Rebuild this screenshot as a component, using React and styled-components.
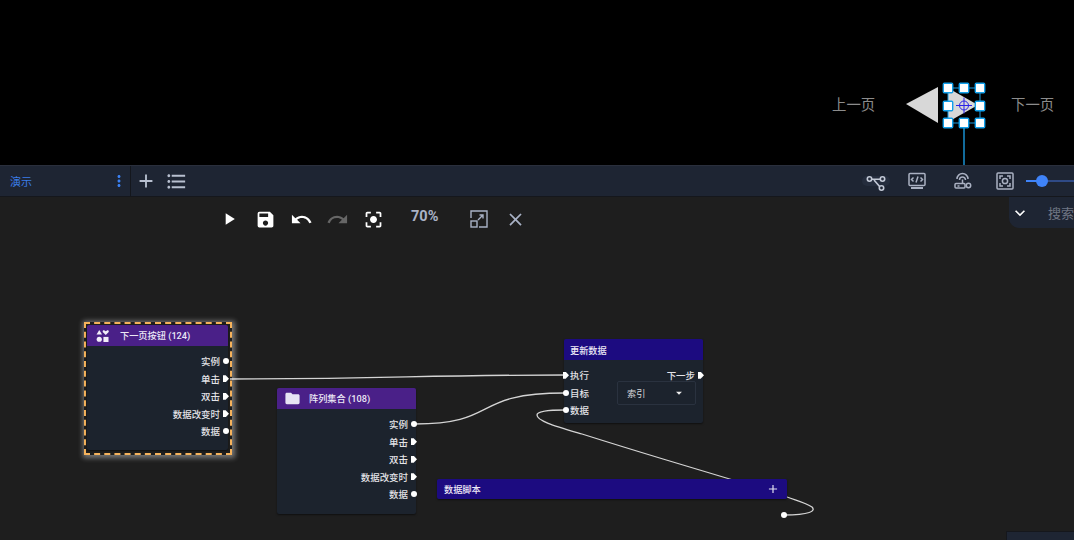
import styled, { createGlobalStyle } from "styled-components";
import {
  MdPlayArrow,
  MdSave,
  MdUndo,
  MdRedo,
  MdCenterFocusStrong,
  MdClose,
  MdAdd,
  MdFormatListBulleted,
  MdMoreVert,
  MdKeyboardArrowDown,
  MdFolder,
  MdArrowDropDown,
} from "react-icons/md";

const FONT = `Roboto, "Noto Sans CJK SC", sans-serif`;

const HANDLES = [
  [948, 88],
  [964, 88],
  [980, 88],
  [948, 106],
  [980, 106],
  [948, 123],
  [964, 123],
  [980, 123],
];

const GlobalStyle = createGlobalStyle`
  html, body {
    margin: 0;
    padding: 0;
    background: #000;
  }
  #root {
    width: 1074px;
    height: 540px;
    overflow: hidden;
  }
`;

const App = () => {
  return (
    <Page>
      <GlobalStyle />
      <Stage>
        <StageLabel $x={832}>上一页</StageLabel>
        <StageDrawing viewBox="0 0 1074 165">
          <polygon points="906,104 938,87 938,123" fill="#d8d8d8" />
          <polygon points="948,88 948,122 978,105" fill="#d8d8d8" />
          <rect x="948" y="88" width="32" height="35" fill="none" stroke="#1b9ade" />
          <line x1="964" y1="128" x2="964" y2="165" stroke="#1b9ade" strokeWidth="1.4" />
          {HANDLES.map(([x, y]) => (
            <rect key={x + "-" + y} x={x - 4.7} y={y - 4.7} width="9.4" height="9.4" rx="1" fill="#fff" stroke="#12a0ea" strokeWidth="1.4" />
          ))}
          <circle cx="964" cy="105.5" r="4.5" fill="none" stroke="#2a22e8" />
          <path d="M956 105.5h16M964 97.5v16" stroke="#2a22e8" />
        </StageDrawing>
        <StageLabel $x={1011}>下一页</StageLabel>
      </Stage>

      <Toolbar>
        <TabCell>
          <TabName>演示</TabName>
          <MdMoreVert size={18} color="#3b82f6" />
        </TabCell>
        <ToolIcons>
          <MdAdd size={22} color="#b8c0d0" />
          <MdFormatListBulleted size={23} color="#b8c0d0" />
        </ToolIcons>
        <RightTools>
          <HintPill>
            <svg width="20" height="18" viewBox="0 0 20 18" fill="none" stroke="#c3c9d6" strokeWidth="1.6">
              <circle cx="3.5" cy="5" r="2.2" />
              <circle cx="16.5" cy="5" r="2.2" />
              <circle cx="15.5" cy="14" r="2.2" />
              <path d="M5.7 5.3 L14.3 5.3 M8 6 L13.6 12.6" />
            </svg>
          </HintPill>
          <ToolGlyph $gap={18} width="18" height="18" viewBox="0 0 18 18">
            <rect x="1" y="1.5" width="16" height="12" rx="1" />
            <path d="M5.5 5.5 L3.5 7.5 L5.5 9.5 M12.5 5.5 L14.5 7.5 L12.5 9.5 M10 4.5 L8 10.5" />
            <path d="M3 16h12" strokeWidth="2" />
          </ToolGlyph>
          <ToolGlyph $gap={27} width="20" height="18" viewBox="0 0 20 18">
            <path d="M4 7 A5.5 5.5 0 0 1 15 7 M6.5 8 A3 3 0 0 1 12.5 8" />
            <path d="M9.5 7.5v4" />
            <rect x="2" y="11.5" width="10" height="4.5" rx="1" />
            <circle cx="15.5" cy="13.5" r="2.2" />
            <path d="M4.5 14h2" />
          </ToolGlyph>
          <ToolGlyph $gap={23} width="18" height="18" viewBox="0 0 18 18">
            <rect x="1" y="1" width="16" height="16" rx="1" />
            <path d="M4 7V4h3M11 4h3v3M14 11v3h-3M7 14H4v-3" />
            <circle cx="9" cy="9" r="2.6" />
          </ToolGlyph>
          <Slider>
            <SliderThumb />
          </Slider>
        </RightTools>
      </Toolbar>

      <Canvas>
        <Wires viewBox="0 0 1074 343">
          <g fill="none" stroke="#d4d4d4" strokeWidth="1.3" transform="translate(0,-197)">
            <path d="M230 379 C 390 379, 420 375, 565 375" />
            <path d="M415 424 C 500 424, 470 393, 565 393" />
            <path d="M784 515 C 810 515, 816 511, 812 507 C 806 503, 798 501, 787 497 L 733 480 L 663 459 C 620 446, 582 434, 582 434 C 555 426, 537 421, 537 415 C 537 411, 548 410, 565 410" />
          </g>
          <circle cx="784" cy="318" r="3" fill="#fff" />
        </Wires>

        <FloatBar>
          <BarIcon $color="#fff"><MdPlayArrow size={20} /></BarIcon>
          <BarIcon $color="#fff"><MdSave size={21} /></BarIcon>
          <BarIcon $color="#fff"><MdUndo size={23} /></BarIcon>
          <BarIcon $color="#666"><MdRedo size={23} /></BarIcon>
          <BarIcon $color="#fff"><MdCenterFocusStrong size={21} /></BarIcon>
          <Zoom>70%</Zoom>
          <BarIcon $color="#a9b2c6">
            <svg width="18" height="18" viewBox="0 0 18 18" fill="none" stroke="currentColor" strokeWidth="1.4">
              <path d="M1 8V1h16v16H9" />
              <rect x="1" y="11" width="6" height="6" />
              <path d="M8 10 L13 5 M9.5 5H13V8.5" />
            </svg>
          </BarIcon>
          <BarIcon $color="#a9b2c6"><MdClose size={21} /></BarIcon>
        </FloatBar>

        <SearchTab>
          <MdKeyboardArrowDown size={20} color="#fff" />
          <SearchText>搜索</SearchText>
        </SearchTab>

        <Selected $x={84} $y={125} />

        <Node $x={87} $y={128} $w={141} $h={125}>
          <NodeHeader $kind="object" $pad={9}>
            <svg width="13" height="12" viewBox="0 0 13 13" fill="#f1edf8">
              <polygon points="3,0 6,5 0,5" />
              <path d="M10 5.5 L7 2.5 C6 1 7.5 -.2 9 .7 L10 1.4 L11 .7 C12.5 -.2 14 1 13 2.5 Z" />
              <circle cx="3" cy="10" r="2.8" />
              <rect x="7.5" y="7.5" width="5.5" height="5.5" />
            </svg>
            <HeaderTitle $gap={11}>下一页按钮 (124)</HeaderTitle>
          </NodeHeader>
          <NodeBody>
            <OutRow label="实例" />
            <OutRow label="单击" arrow />
            <OutRow label="双击" arrow />
            <OutRow label="数据改变时" arrow />
            <OutRow label="数据" />
          </NodeBody>
        </Node>

        <Node $x={277} $y={191} $w={139} $h={126}>
          <NodeHeader $kind="object">
            <MdFolder size={17} color="#e6e4f4" />
            <HeaderTitle $gap={8}>阵列集合 (108)</HeaderTitle>
          </NodeHeader>
          <NodeBody>
            <OutRow label="实例" />
            <OutRow label="单击" arrow />
            <OutRow label="双击" arrow />
            <OutRow label="数据改变时" arrow />
            <OutRow label="数据" />
          </NodeBody>
        </Node>

        <Node $x={564} $y={142} $w={139} $h={84}>
          <NodeHeader $kind="action" $pad={6}>
            <HeaderTitle>更新数据</HeaderTitle>
          </NodeHeader>
          <NodeBody>
            <MixedRow>
              <InPort><Arrow /></InPort>
              <RowLabel>执行</RowLabel>
              <RowRight>
                <RowLabel>下一步</RowLabel>
                <OutPort><Arrow /></OutPort>
              </RowRight>
            </MixedRow>
            <MixedRow>
              <InPort><Dot /></InPort>
              <RowLabel>目标</RowLabel>
              <RowRight>
                <SelectBox>
                  <span>索引</span>
                  <MdArrowDropDown size={14} color="#eee" />
                </SelectBox>
              </RowRight>
            </MixedRow>
            <MixedRow>
              <InPort><Dot /></InPort>
              <RowLabel>数据</RowLabel>
            </MixedRow>
          </NodeBody>
        </Node>

        <Node $x={437} $y={282} $w={350} $h={20}>
          <ScriptBar>
            <HeaderTitle>数据脚本</HeaderTitle>
            <MdAdd size={14} color="#e6e4f4" />
          </ScriptBar>
        </Node>

        <CornerPanel />
      </Canvas>
    </Page>
  );
};

const OutRow = ({ label, arrow }) => (
  <OutputRow>
    <RowLabel>{label}</RowLabel>
    <OutPort>{arrow ? <Arrow /> : <Dot />}</OutPort>
  </OutputRow>
);

const Page = styled.div`
  display: flex;
  flex-direction: column;
  width: 1074px;
  height: 540px;
  font-family: ${FONT};
`;

const Stage = styled.div`
  position: relative;
  height: 165px;
  background: #000;
`;

const StageLabel = styled.span`
  position: absolute;
  left: ${(p) => p.$x}px;
  top: 96px;
  font-size: 14.4px;
  line-height: 20px;
  color: #8c8c8c;
`;

const StageDrawing = styled.svg`
  position: absolute;
  left: 0;
  top: 0;
  width: 1074px;
  height: 165px;
`;

const Toolbar = styled.div`
  display: flex;
  align-items: center;
  height: 32px;
  box-sizing: border-box;
  background: #1e2533;
  border-top: 1px solid #2a2f3c;
  border-bottom: 1px solid #15171c;
`;

const TabCell = styled.div`
  display: flex;
  align-items: center;
  justify-content: space-between;
  box-sizing: border-box;
  width: 131px;
  height: 100%;
  padding: 0 2px 0 10px;
  border-right: 1px solid #14171d;
`;

const TabName = styled.span`
  font-size: 11px;
  color: #3b7de8;
`;

const ToolIcons = styled.div`
  display: flex;
  align-items: center;
  gap: 8px;
  margin-left: 4px;
`;

const RightTools = styled.div`
  display: flex;
  align-items: center;
  margin-left: auto;
  width: 212px;
`;

const HintPill = styled.div`
  display: flex;
  align-items: center;
  justify-content: center;
  width: 28px;
  height: 10px;
  border-radius: 5px;
  background: #252d3d;

  svg {
    margin-top: 3px;
  }
`;

const ToolGlyph = styled.svg`
  flex: none;
  margin-left: ${(p) => p.$gap}px;
  fill: none;
  stroke: #aab1c2;
  stroke-width: 1.5;
`;

const Slider = styled.div`
  position: relative;
  flex: 1;
  height: 2px;
  margin-left: 12px;
  background: linear-gradient(to right, #3f83f8 16px, #2f4a86 16px);
`;

const SliderThumb = styled.div`
  position: absolute;
  left: 10px;
  top: -5px;
  width: 12px;
  height: 12px;
  border-radius: 50%;
  background: #3f83f8;
`;

const Canvas = styled.div`
  position: relative;
  flex: 1;
  background: #1e1e1e;
  overflow: hidden;
`;

const Wires = styled.svg`
  position: absolute;
  left: 0;
  top: 0;
  width: 1074px;
  height: 343px;
`;

const FloatBar = styled.div`
  position: absolute;
  left: 217px;
  top: 10px;
  display: flex;
  align-items: center;
  height: 24px;
`;

const BarIcon = styled.div`
  display: flex;
  align-items: center;
  justify-content: center;
  width: 24px;
  height: 24px;
  margin-right: 12px;
  color: ${(p) => p.$color};
`;

const Zoom = styled.span`
  width: 27px;
  margin: -5px 29px 0 14px;
  font-size: 14.5px;
  font-weight: 700;
  color: #a9b2c6;
`;

const SearchTab = styled.div`
  position: absolute;
  right: 0;
  top: 0;
  display: flex;
  align-items: center;
  box-sizing: border-box;
  width: 65px;
  height: 31px;
  padding-left: 1px;
  border-radius: 0 0 0 10px;
  background: #1e2533;
  overflow: hidden;
`;

const SearchText = styled.span`
  margin-left: 18px;
  font-size: 13px;
  white-space: nowrap;
  color: #6f7684;
`;

const Selected = styled.div`
  position: absolute;
  left: ${(p) => p.$x}px;
  top: ${(p) => p.$y}px;
  box-sizing: border-box;
  width: 148px;
  height: 133px;
  border: 2px dashed #f5b25b;
  box-shadow: 1px 1px 5px 2px rgba(255, 255, 255, 0.4);
`;

const Node = styled.div`
  position: absolute;
  left: ${(p) => p.$x}px;
  top: ${(p) => p.$y}px;
  display: flex;
  flex-direction: column;
  width: ${(p) => p.$w}px;
  height: ${(p) => p.$h}px;
  border-radius: 2px;
  background: #1c232d;
  box-shadow: 0 1px 2px rgba(0, 0, 0, 0.5);
`;

const NodeHeader = styled.div`
  display: flex;
  align-items: center;
  height: 21px;
  padding: 0 ${(p) => p.$pad || 7}px;
  border-radius: 2px 2px 0 0;
  background: ${(p) => (p.$kind === "action" ? "#1c0b80" : "#4a2088")};
`;

const ScriptBar = styled.div`
  display: flex;
  align-items: center;
  justify-content: space-between;
  height: 100%;
  padding: 0 7px;
  border-radius: 2px;
  background: #1c0b80;
`;

const HeaderTitle = styled.span`
  margin-left: ${(p) => p.$gap || 0}px;
  margin-top: ${(p) => (p.$gap ? -2 : 0)}px;
  font-size: 9.2px;
  font-weight: 500;
  color: #ece9f6;
`;

const NodeBody = styled.div`
  display: flex;
  flex-direction: column;
  padding-top: 6.5px;
`;

const OutputRow = styled.div`
  display: flex;
  align-items: center;
  justify-content: flex-end;
  height: 17.5px;
`;

const MixedRow = styled.div`
  display: flex;
  align-items: center;
  height: 17.5px;
`;

const RowLabel = styled.span`
  font-size: 9.45px;
  font-weight: 500;
  white-space: nowrap;
  color: #e4e4e8;
`;

const RowRight = styled.div`
  display: flex;
  align-items: center;
  margin-left: auto;
`;

const OutPort = styled.span`
  display: flex;
  align-items: center;
  justify-content: center;
  width: 6px;
  margin: 0 -1px 0 3px;
`;

const InPort = styled.span`
  display: flex;
  align-items: center;
  justify-content: center;
  width: 6px;
  margin: 0 1px 0 -1px;
`;

const Dot = styled.i`
  display: block;
  width: 6px;
  height: 6px;
  border-radius: 50%;
  background: #fff;
`;

const Arrow = styled.i`
  display: block;
  width: 6px;
  height: 7px;
  background: #fff;
  clip-path: polygon(0 0, 45% 0, 100% 50%, 45% 100%, 0 100%);
`;

const SelectBox = styled.div`
  display: flex;
  align-items: center;
  justify-content: space-between;
  box-sizing: border-box;
  width: 79px;
  height: 24px;
  margin-right: 7px;
  padding: 0 9px;
  border: 1px solid #2a323f;
  border-radius: 2px;
  font-size: 9.2px;
  color: #d5d6da;
`;

const CornerPanel = styled.div`
  position: absolute;
  right: 0;
  bottom: 0;
  width: 67px;
  height: 8px;
  border-top: 1px solid #15171c;
  border-left: 1px solid #15171c;
  background: #1e2533;
`;

export default App;
